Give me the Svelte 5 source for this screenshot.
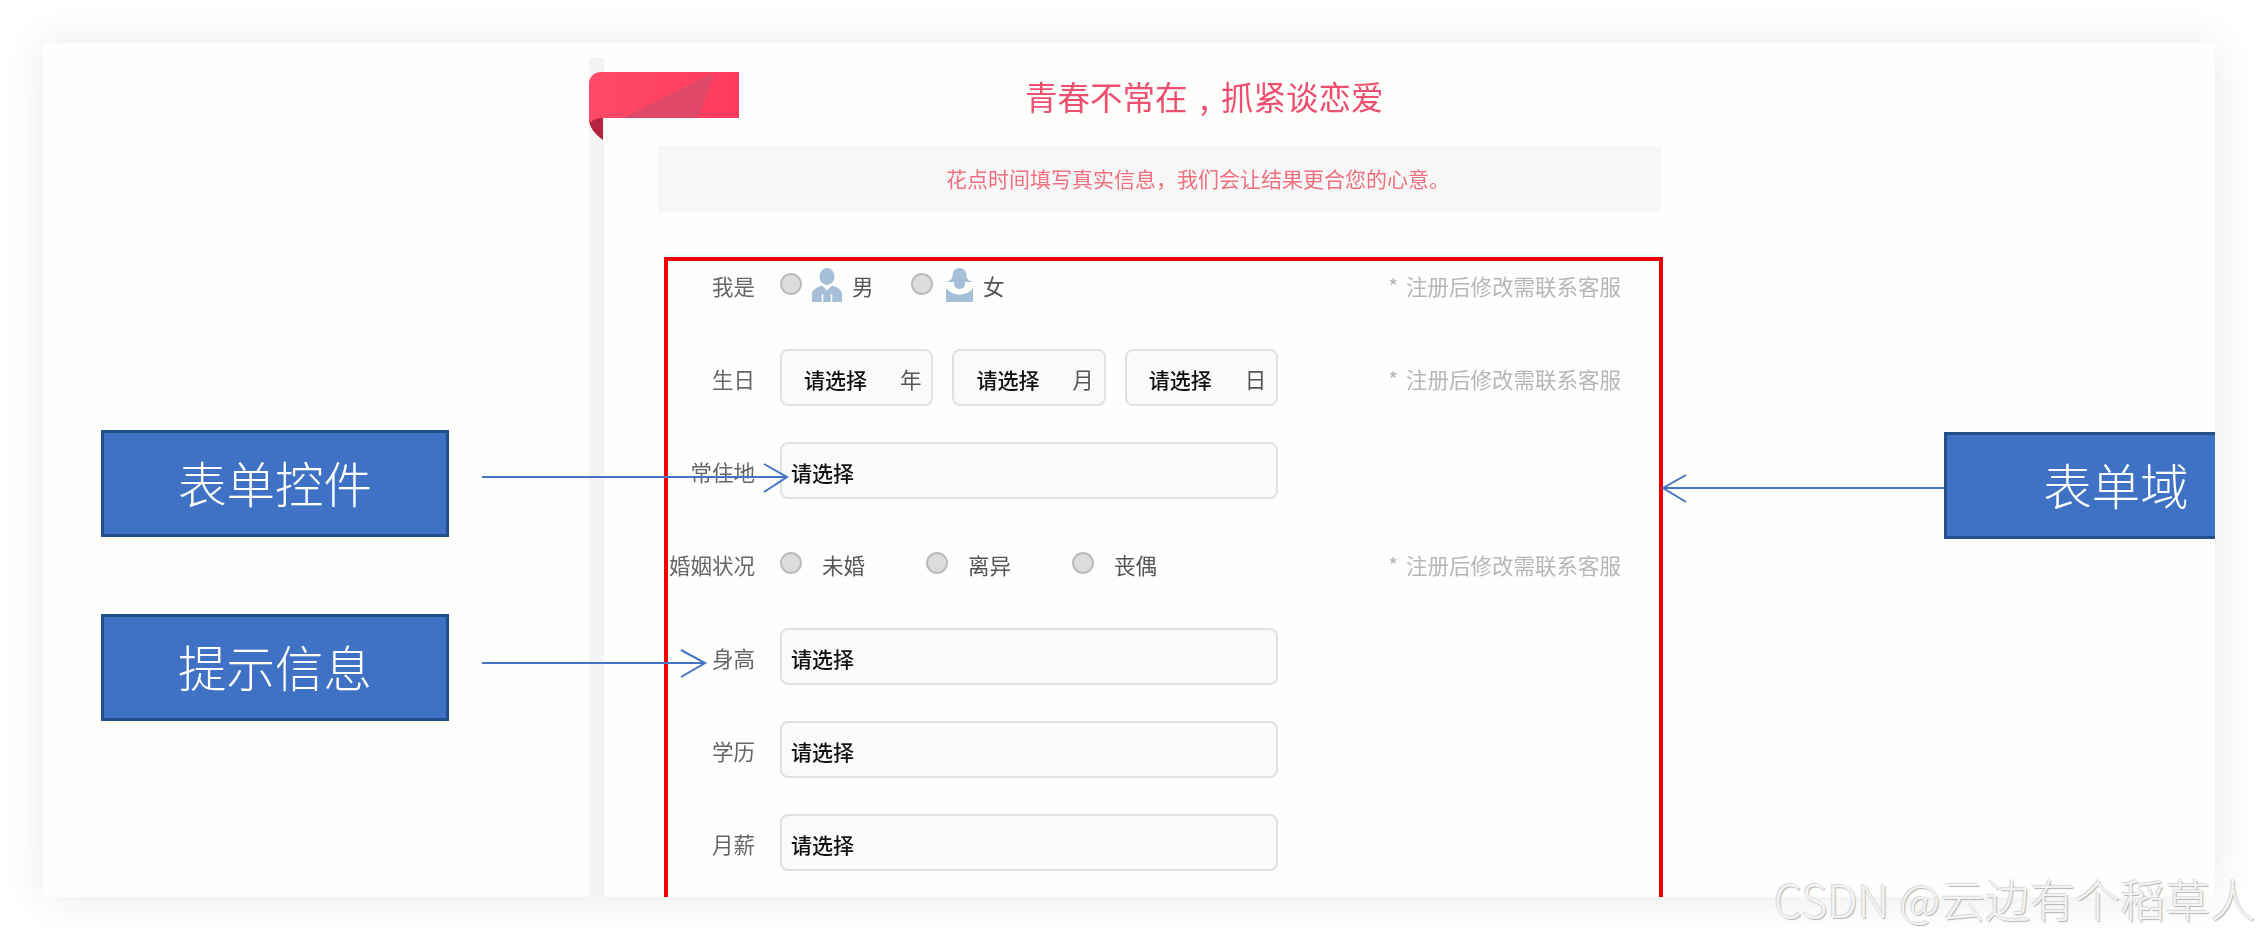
<script>
  const hint = '* 注册后修改需联系客服';
  const dates = ['年', '月', '日'];
  const marital = ['未婚', '离异', '丧偶'];
  const selects = [['身高'], ['学历'], ['月薪']];
</script>

<div class="page">
  <main class="card">
    <section class="panel">
      <h1 class="title">青春不常在 , 抓紧谈恋爱</h1>
      <p class="notice">花点时间填写真实信息，我们会让结果更合您的心意。</p>
      <form class="form">
        <div class="rows">
          <div class="row">
            <span class="label">我是</span>
            <div class="opts gender">
              <span class="opt">
                <i class="radio"></i>
                <svg class="icon" width="30" height="34" viewBox="0 0 30 34" aria-hidden="true">
                  <ellipse cx="15" cy="8.5" rx="7.5" ry="8.5" />
                  <path d="M0 34v-8c0-4 5-7 10-8.500l5 5 5-5c5 1.500 10 4.500 10 8.500v8z" />
                  <path class="cut" d="M10.500 26v8M19.500 26v8" />
                </svg>
                <span class="txt">男</span>
              </span>
              <span class="opt">
                <i class="radio"></i>
                <svg class="icon woman" width="27" height="34" viewBox="0 0 27 34" aria-hidden="true">
                  <path d="M13.500 0c5 0 7 4 7 8 0 3 3 5 6 6H.5c3-1 6-3 6-6 0-4 2-8 7-8z" />
                  <ellipse cx="13.500" cy="16" rx="5.500" ry="5" />
                  <path d="M0 20c3 4 8 6.500 13.500 6.500S24 24 27 20v14H0z" />
                </svg>
                <span class="txt">女</span>
              </span>
            </div>
            <span class="hint">{hint}</span>
          </div>

          <div class="row">
            <span class="label">生日</span>
            <div class="dates">
              {#each dates as d}
                <div class="box date"><b>请选择</b><span>{d}</span></div>
              {/each}
            </div>
            <span class="hint">{hint}</span>
          </div>

          <div class="row">
            <span class="label">常住地</span>
            <div class="box wide"><b>请选择</b></div>
          </div>

          <div class="row">
            <span class="label">婚姻状况</span>
            <div class="opts marital">
              {#each marital as m}
                <span class="opt"><i class="radio"></i><span class="txt">{m}</span></span>
              {/each}
            </div>
            <span class="hint">{hint}</span>
          </div>

          {#each selects as s}
            <div class="row">
              <span class="label">{s[0]}</span>
              <div class="box wide"><b>请选择</b></div>
            </div>
          {/each}
        </div>
      </form>
    </section>

    <svg class="ribbon" width="150" height="68" viewBox="0 0 150 68" aria-hidden="true">
      <defs>
        <linearGradient id="rib" x1="0" x2="1" y1="0" y2="0">
          <stop offset="0" stop-color="#fe4a68" />
          <stop offset="1" stop-color="#ff3a5e" />
        </linearGradient>
      </defs>
      <path class="fold" d="M0 46h14v22C6 62 0 56 0 46z" />
      <path fill="url(#rib)" d="M0 12C0 5 5 0 12 0h138v46H14C8 46 3 48 0 52z" />
      <path fill="#e04868" d="M34 46 126 0l-17 46z" />
    </svg>

    <div class="tag t1">表单控件</div>
    <div class="tag t2">提示信息</div>
    <div class="tag t3">表单域</div>
  </main>

  <svg class="arrows" width="2258" height="940" viewBox="0 0 2258 940" aria-hidden="true">
    <path d="M482 477H787M764 464l23 13-23 15" />
    <path d="M482 663H705M681 650l24 13-24 14" />
    <path d="M1944 488H1663M1686 475l-23 13 23 14" />
  </svg>

  <div class="mark">CSDN @云边有个稻草人</div>
</div>

<style>
  :global(body) {
    margin: 0;
    background: #fff;
  }
  .page {
    position: relative;
    width: 2258px;
    height: 940px;
    padding: 43px 43px;
    box-sizing: border-box;
    overflow: hidden;
    font-family: "Noto Sans CJK SC", "Noto Sans", sans-serif;
  }
  .card {
    position: relative;
    height: 854px;
    background: #fefefc;
    box-shadow: 0 0 42px rgba(0, 0, 0, 0.09);
    overflow: hidden;
  }
  .panel {
    margin: 15px 0 0 546px;
    width: 1080px;
    height: 839px;
    border-left: 15px solid #f3f4f3;
    box-sizing: border-box;
    padding-top: 18px;
    filter: blur(0.45px);
  }
  .title {
    margin: 0 0 30px;
    height: 40px;
    line-height: 40px;
    font-size: 32.5px;
    font-weight: 400;
    word-spacing: 5px;
    color: #ee4f6e;
    padding-left: 421px;
    white-space: nowrap;
  }
  .notice {
    margin: 0 0 45px 54px;
    width: 1003px;
    height: 66px;
    box-sizing: border-box;
    padding-left: 288px;
    background: #f6f7f6;
    line-height: 64px;
    font-size: 21px;
    color: #f0707f;
  }
  .form {
    margin-left: 60px;
    width: 999px;
    height: 660px;
    box-sizing: border-box;
    border: 4px solid #f00000;
    border-bottom: 0;
    box-shadow: 0 -2px 0 #e8ffff, inset 0 2px 0 #e8ffff;
  }
  .rows {
    display: grid;
    grid-auto-rows: 93px;
    margin-top: -23px;
  }
  .row {
    display: flex;
    align-items: center;
    font-size: 21.5px;
    color: #666;
  }
  .label {
    flex: none;
    width: 87px;
    margin-right: 25px;
    text-align: right;
    white-space: nowrap;
    padding-top: 2px;
  }
  .hint {
    margin-left: auto;
    margin-right: 38px;
    color: #b6b6b6;
    white-space: nowrap;
    padding-top: 2px;
    word-spacing: 3px;
  }
  .opts {
    display: flex;
  }
  .opt {
    display: flex;
    align-items: center;
  }
  .gender {
    gap: 36px;
  }
  .gender .opt {
    width: 95px;
  }
  .marital .opt {
    width: 146px;
  }
  .radio {
    flex: none;
    width: 22px;
    height: 22px;
    box-sizing: border-box;
    border-radius: 50%;
    border: 2px solid #b9bcb9;
    background: #dcdcda;
    margin-top: -2px;
  }
  .icon {
    flex: none;
    margin: 0 10px;
    fill: #a4bfd6;
  }
  .woman {
    margin-left: 13px;
  }
  .cut {
    fill: none;
    stroke: #fefefc;
    stroke-width: 1.5;
  }
  .txt {
    padding-top: 2px;
    color: #555;
  }
  .marital .txt {
    margin-left: 20px;
  }
  .dates {
    display: flex;
    gap: 19px;
  }
  .box {
    height: 57px;
    box-sizing: border-box;
    display: flex;
    align-items: center;
    background: #fafaf8;
    border: 2px solid #e1e2e0;
    border-radius: 8px;
  }
  .box b {
    font-weight: 500;
    color: #111;
    font-size: 21px;
    padding-top: 2px;
  }
  .wide {
    width: 498px;
    padding-left: 9px;
  }
  .date {
    width: 153.400px;
    justify-content: space-between;
    padding: 0 10px 0 22px;
  }
  .date span {
    padding-top: 2px;
    color: #555;
  }
  .ribbon {
    position: absolute;
    left: 546px;
    top: 29px;
    filter: blur(0.45px);
  }
  .fold {
    fill: #b5243f;
  }
  .tag {
    position: absolute;
    height: 107px;
    box-sizing: border-box;
    padding-bottom: 4px;
    display: flex;
    align-items: center;
    justify-content: center;
    background: #3f72c4;
    border: 3px solid #234f8c;
    color: #fff;
    font-size: 48.5px;
    font-weight: 300;
  }
  .t1 {
    left: 58px;
    top: 387px;
    width: 348px;
  }
  .t2 {
    left: 58px;
    top: 571px;
    width: 348px;
  }
  .t3 {
    left: 1901px;
    top: 389px;
    width: 344px;
  }
  .arrows {
    position: absolute;
    inset: 0;
    fill: none;
    stroke: #4472c4;
    stroke-width: 2;
    pointer-events: none;
  }
  .mark {
    position: absolute;
    left: 1774px;
    top: 866px;
    line-height: 66px;
    font-size: 45px;
    font-weight: 300;
    white-space: nowrap;
    color: #f3f3f3;
    text-shadow: 1px 1px 1px #b4b4b4, -1px -1px 1px #d8d8d8;
  }
</style>
